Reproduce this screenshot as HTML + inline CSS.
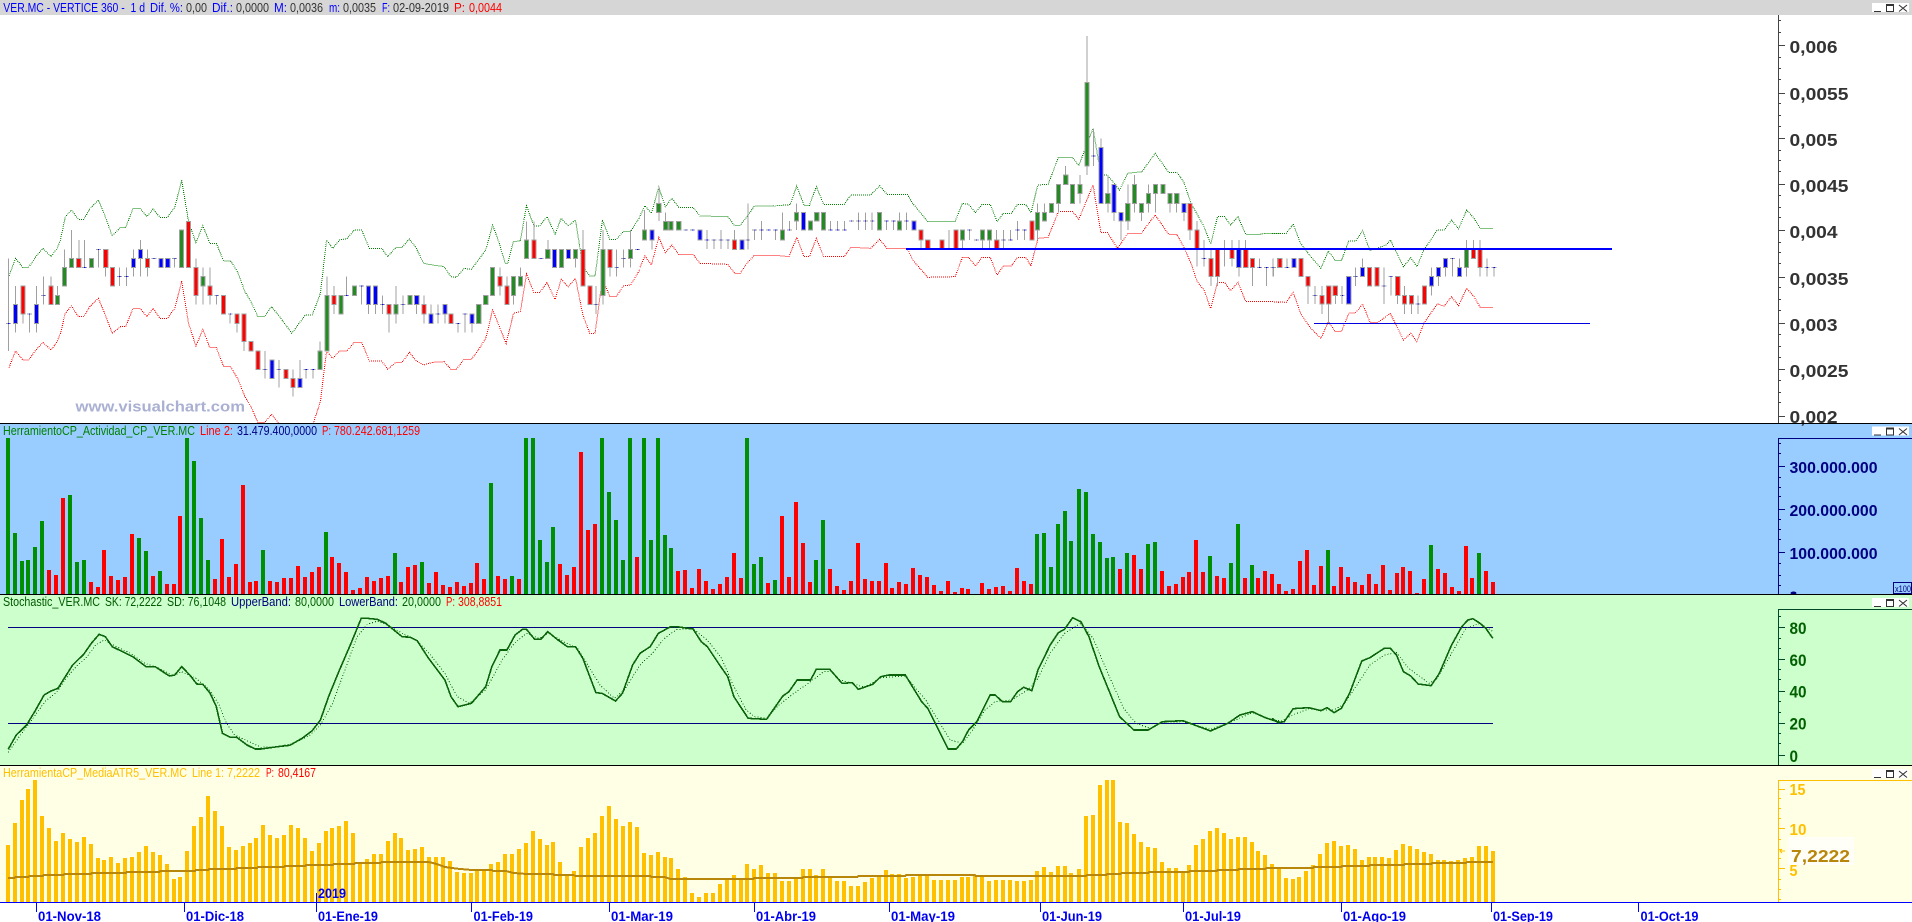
<!DOCTYPE html>
<html><head><meta charset="utf-8"><title>VER.MC</title>
<style>
html,body{margin:0;padding:0;background:#fff;overflow:hidden}
svg{display:block}
text{font-family:"Liberation Sans",Arial,sans-serif}
.t{font-size:13px}
.b{font-weight:bold;font-size:17.5px}
.b2{font-weight:bold;font-size:16px}
.b3{font-weight:bold;font-size:16.5px}
.b4{font-weight:bold;font-size:15.5px}
.d{font-weight:bold;font-size:14px;fill:#0000f0}
.ns{vector-effect:non-scaling-stroke;fill:none}
.body{vector-effect:non-scaling-stroke;stroke:#a0a0a0;stroke-width:1;shape-rendering:crispEdges}
.wick{vector-effect:non-scaling-stroke;stroke:#a0a0a0;stroke-width:1;fill:none;shape-rendering:crispEdges}
.dot{vector-effect:non-scaling-stroke;stroke:#0000ff;stroke-width:1;fill:none;shape-rendering:crispEdges}
.eg{vector-effect:non-scaling-stroke;stroke:#008000;stroke-width:1;stroke-dasharray:1 1;fill:none;shape-rendering:crispEdges}
.er{vector-effect:non-scaling-stroke;stroke:#ff0000;stroke-width:1;stroke-dasharray:1 1;fill:none;shape-rendering:crispEdges}
.sk{vector-effect:non-scaling-stroke;stroke:#0b640b;stroke-width:1.6;fill:none;shape-rendering:crispEdges}
.sd{vector-effect:non-scaling-stroke;stroke:#0b640b;stroke-width:1;stroke-dasharray:1 2;fill:none;shape-rendering:crispEdges}
.ma{vector-effect:non-scaling-stroke;stroke:#b8860b;stroke-width:2;fill:none;shape-rendering:crispEdges}
.bar{fill:none;stroke-width:4;shape-rendering:crispEdges}
.tk{fill:none;stroke-width:1;shape-rendering:crispEdges}
.ico{fill:none;stroke:#333;stroke-width:1}
</style></head>
<body>
<svg width="1912" height="922" viewBox="0 0 1912 922" xmlns="http://www.w3.org/2000/svg">
<defs><clipPath id="c1"><rect x="0" y="15" width="1778" height="408"/></clipPath></defs>
<rect width="1912" height="922" fill="#fff"/>
<rect width="1912" height="15" fill="#d6d6d6"/>
<rect y="424" width="1912" height="170" fill="#99ccff"/>
<rect y="595" width="1912" height="170" fill="#ccffcc"/>
<rect y="766" width="1912" height="136" fill="#ffffe6"/>

<!-- envelopes -->
<g clip-path="url(#c1)">
<g transform="scale(.40816 .33333)">
<polyline class="eg" points="22,828 38,775 56,802 70,802 88,770 105,745 125,770 140,745 148,720 160,650 175,630 192,658 205,658 220,627 241,600 258,650 275,708 295,682 308,682 326,625 343,625 360,650 375,627 392,652 410,652 428,622 445,540 462,665 480,728 497,677 514,730 530,730 548,783 565,783 582,815 600,875 615,905 632,950 648,950 665,920 682,945 715,1000 748,945 765,945 785,880 800,720 815,745 832,720 850,716 868,690 886,690 905,745 935,745 950,770 970,742 985,742 1003,717 1020,745 1038,790 1060,795 1088,800 1105,830 1118,832 1137,805 1155,808 1172,780 1190,750 1207,675 1222,725 1238,790 1244,790 1258,725 1275,722 1290,617 1308,678 1322,678 1340,650 1360,702 1375,655 1392,678 1410,660 1428,800 1445,828 1458,828 1476,660 1494,718 1510,718 1527,695 1545,695 1568,650"/>
<polyline class="er" points="22,1103 38,1053 56,1080 70,1080 88,1050 105,1027 125,1050 140,1025 148,1000 160,940 175,918 192,950 205,950 220,920 241,895 258,945 275,1000 295,980 308,980 326,925 343,925 360,950 375,925 392,955 410,955 428,925 445,843 462,970 480,1038 497,988 514,1043 530,1043 548,1100 565,1100 582,1135 600,1190 615,1220 632,1268 648,1268 665,1243 682,1268 715,1320 748,1300 768,1268 785,1205 800,1053 815,1075 832,1053 850,1053 868,1027 886,1027 905,1083 935,1083 950,1108 970,1087 985,1087 1003,1057 1020,1083 1038,1095 1060,1087 1088,1085 1105,1108 1118,1108 1137,1078 1155,1078 1172,1050 1190,1015 1207,930 1222,975 1240,1030 1258,940 1275,935 1290,822 1308,878 1322,878 1340,848 1360,898 1375,838 1392,860 1410,835 1428,945 1445,1000 1458,1000 1476,835 1494,890 1510,890 1527,858 1545,855 1568,808"/>
</g>
<g transform="translate(640 0) scale(.40816 .33333)">
<polyline class="eg" points="0,648 12,617 28,640 46,562 62,620 78,595 95,622 130,622 147,648 215,650 232,677 245,677 262,650 280,618 325,618 368,614 384,558 402,616 415,616 432,560 450,613 500,613 517,585 565,585 587,557 605,583 655,583 668,610 705,665 772,665 790,610 805,613 822,638 838,613 858,613 875,665 890,640 910,640 925,613 945,613 958,638 975,555 1000,553 1025,472 1060,472 1075,497 1110,385 1129,525 1145,525 1175,570 1195,520 1230,515 1262,460 1295,517 1315,517 1332,545 1350,610 1382,680 1398,732 1415,650 1432,650 1447,675 1465,650 1484,703 1520,703 1530,700 1568,700"/>
<polyline class="er" points="0,802 12,768 28,795 46,712 62,758 78,735 95,763 130,763 147,790 215,793 232,820 245,820 262,790 280,766 335,766 365,770 384,712 402,770 415,770 432,715 450,770 500,770 517,742 565,745 587,718 605,745 655,745 668,780 705,832 772,830 790,772 805,772 822,798 838,772 858,772 875,825 890,798 910,798 925,772 945,772 958,798 975,715 1000,712 1025,635 1060,635 1075,658 1110,555 1129,697 1145,697 1170,745 1195,700 1228,700 1262,645 1295,703 1315,703 1332,740 1350,790 1365,845 1382,870 1398,925 1415,847 1432,847 1447,872 1465,847 1484,905 1550,905 1568,908"/>
</g>
<g transform="translate(1272 0) scale(.40816 .33333)">
<polyline class="eg" points="0,700 35,700 52,672 70,730 95,770 120,805 138,753 155,782 170,782 188,723 205,723 222,692 240,752 280,735 290,720 322,800 340,773 355,800 372,750 405,690 422,690 440,660 457,687 477,630 495,655 510,685 541,685"/>
<polyline class="er" points="0,905 35,907 52,877 70,940 95,985 120,1015 138,965 155,995 170,995 188,940 205,938 222,912 240,967 260,967 290,940 322,1020 340,1000 355,1025 372,970 405,912 422,918 440,890 457,917 477,865 495,890 510,922 541,922"/>
</g>
</g>

<!-- candles segment 1 -->
<g transform="scale(.40816 .33333)">
<path class="wick" d="M21 775V1053M38 858V997M56 858V970M72 942V997M89 858V997M107 830V913M125 830V913M141 858V913M158 748V858M175 690V802M193 720V802M207 720V802M241 748V802M259 748V830M293 802V858M310 802V858M327 748V830M344 720V830M361 748V830M428 775V802M480 775V913M497 802V913M514 802V913M531 886V913M564 942V970M581 942V997M598 942V1053M649 1053V1135M683 1080V1163M718 1108V1190M735 1080V1163M750 1108V1135M767 1108V1135M784 1025V1108M801 830V1053M818 858V942M849 830V886M886 858V913M903 858V942M920 858V942M937 886V942M953 913V997M970 858V970M987 886V942M1021 886V942M1039 886V970M1056 913V970M1073 913V970M1090 913V970M1122 970V997M1139 942V997M1156 942V997M1225 802V886M1242 830V913M1258 830V913M1275 802V858M1290 665V775M1308 665V775M1342 720V775M1410 748V802M1428 690V858M1460 858V942M1477 690V913M1494 748V830M1511 748V830M1528 748V802M1545 690V802"/>
<path class="body" fill="#228b22" d="M136 886h10V913h-10zM153 802h10V858h-10zM170 775h10V802h-10zM219 775h10V802h-10zM440 690h10V802h-10zM492 830h10V858h-10zM796 886h10V1053h-10zM779 1053h10V1108h-10zM830 886h10V942h-10zM864 858h10V886h-10zM965 913h10V942h-10zM999 886h10V913h-10zM1168 913h10V970h-10zM1185 886h10V913h-10zM1202 802h10V886h-10zM1253 830h10V886h-10zM1270 830h10V858h-10zM1285 720h10V775h-10zM1337 748h10V775h-10zM1371 748h10V802h-10zM1405 748h10V775h-10zM1472 748h10V886h-10zM1540 748h10V775h-10z"/>
<path class="body" fill="#ff0000" d="M51 858h10V942h-10zM120 858h10V913h-10zM188 775h10V802h-10zM254 748h10V802h-10zM271 802h10V858h-10zM356 775h10V802h-10zM457 665h10V802h-10zM475 802h10V886h-10zM509 858h10V886h-10zM543 886h10V942h-10zM576 942h10V970h-10zM593 942h10V1025h-10zM610 1025h10V1053h-10zM627 1053h10V1108h-10zM696 1108h10V1135h-10zM713 1135h10V1163h-10zM813 886h10V913h-10zM948 913h10V942h-10zM1034 913h10V942h-10zM1100 942h10V970h-10zM1220 830h10V858h-10zM1237 858h10V913h-10zM1303 720h10V775h-10zM1423 748h10V858h-10zM1440 858h10V913h-10zM1489 748h10V802h-10z"/>
<path class="body" fill="#0000ff" d="M33 913h10V970h-10zM84 913h10V970h-10zM322 775h10V802h-10zM339 748h10V775h-10zM389 775h10V802h-10zM406 775h10V802h-10zM661 1080h10V1135h-10zM730 1135h10V1163h-10zM898 858h10V913h-10zM915 858h10V913h-10zM1016 886h10V913h-10zM1051 942h10V970h-10zM1085 913h10V942h-10zM1151 942h10V970h-10zM1354 748h10V802h-10zM1388 748h10V775h-10z"/>
<path class="wick" d="M15 970h12M66 942h12M101 886h12M201 802h12M235 748h12M287 830h12M304 830h12M371 775h12M422 775h12M525 886h12M558 942h12M643 1108h12M677 1108h12M744 1108h12M761 1108h12M843 886h12M880 858h12M931 913h12M981 913h12M1067 942h12M1116 970h12M1133 942h12M1319 775h12M1454 913h12M1505 802h12M1522 775h12M1556 748h12"/>
<path class="dot" d="M20 970h3M71 942h3M106 886h3M206 802h3M240 748h3M292 830h3M309 830h3M376 775h3M427 775h3M530 886h3M563 942h3M648 1108h3M682 1108h3M749 1108h3M766 1108h3M848 886h3M885 858h3M936 913h3M986 913h3M1072 942h3M1121 970h3M1138 942h3M1324 775h3M1459 913h3M1510 802h3M1527 775h3M1561 748h3"/>
</g>
<!-- candles segment 2 -->
<g transform="translate(640 0) scale(.40816 .33333)">
<path class="wick" d="M11 630V720M29 690V748M46 560V663M63 637V690M164 690V747M181 720V747M198 690V747M215 720V747M232 690V748M264 610V748M281 690V720M298 663V720M332 690V720M349 637V720M366 663V690M383 610V690M467 663V690M484 663V690M501 663V690M535 637V690M552 637V690M569 637V690M604 663V690M621 663V690M636 637V690M653 637V690M688 690V748M757 690V748M790 690V748M807 690V720M839 690V748M856 690V748M874 690V748M891 690V748M908 690V720M925 663V720M942 690V720M974 610V720M991 610V663M1025 553V637M1043 498V553M1078 525V610M1095 108V525M1111 385V498M1129 415V610M1146 525V637M1161 553V663M1178 637V720M1195 553V690M1212 525V637M1229 610V663M1246 553V637M1263 553V637M1298 580V637M1315 580V637M1333 610V663M1348 610V720M1365 663V800M1382 720V800M1399 748V858M1415 748V858M1432 720V800M1450 720V800M1467 720V830M1484 720V802M1501 775V858M1518 775V802M1535 802V858M1552 802V830"/>
<path class="body" fill="#228b22" d="M6 690h10V720h-10zM41 610h10V637h-10zM58 665h10V690h-10zM71 665h10V690h-10zM90 665h10V690h-10zM344 690h10V720h-10zM378 637h10V663h-10zM413 663h10V690h-10zM428 637h10V663h-10zM445 637h10V690h-10zM582 637h10V690h-10zM631 663h10V690h-10zM785 690h10V720h-10zM834 690h10V720h-10zM851 690h10V720h-10zM969 637h10V690h-10zM986 637h10V663h-10zM1003 610h10V637h-10zM1020 553h10V610h-10zM1038 525h10V553h-10zM1055 553h10V610h-10zM1073 553h10V580h-10zM1090 248h10V498h-10zM1141 580h10V610h-10zM1190 610h10V663h-10zM1207 553h10V610h-10zM1224 610h10V637h-10zM1241 580h10V610h-10zM1258 553h10V580h-10zM1276 553h10V580h-10zM1293 580h10V610h-10zM1310 580h10V610h-10z"/>
<path class="body" fill="#ff0000" d="M227 720h10V748h-10zM683 690h10V720h-10zM700 720h10V748h-10zM735 720h10V748h-10zM769 690h10V748h-10zM869 720h10V748h-10zM955 663h10V720h-10zM1343 610h10V690h-10zM1360 690h10V748h-10zM1394 775h10V830h-10zM1410 748h10V830h-10zM1445 748h10V775h-10zM1479 748h10V802h-10zM1496 775h10V802h-10zM1562 775h10V802h-10z"/>
<path class="body" fill="#0000ff" d="M24 690h10V720h-10zM142 690h10V720h-10zM245 720h10V748h-10zM396 637h10V690h-10zM666 663h10V690h-10zM1124 443h10V610h-10zM1156 553h10V637h-10zM1173 637h10V663h-10zM1328 610h10V637h-10zM1462 748h10V802h-10z"/>
<path class="wick" d="M106 690h12M123 690h12M158 720h12M175 720h12M192 720h12M209 720h12M258 720h12M275 690h12M292 690h12M309 690h12M326 690h12M360 690h12M461 690h12M478 690h12M495 690h12M512 663h12M529 663h12M546 663h12M563 663h12M598 663h12M615 663h12M647 663h12M716 748h12M751 748h12M801 690h12M818 720h12M885 720h12M902 720h12M919 690h12M936 690h12M1105 468h12M1376 775h12M1426 748h12M1512 802h12M1529 802h12M1546 802h12"/>
<path class="dot" d="M111 690h3M128 690h3M163 720h3M180 720h3M197 720h3M214 720h3M263 720h3M280 690h3M297 690h3M314 690h3M331 690h3M365 690h3M466 690h3M483 690h3M500 690h3M517 663h3M534 663h3M551 663h3M568 663h3M603 663h3M620 663h3M652 663h3M806 690h3M823 720h3M890 720h3M907 720h3M924 690h3M941 690h3M1110 468h3M1381 775h3M1517 802h3M1534 802h3M1551 802h3"/>
</g>
<!-- candles segment 3 -->
<g transform="translate(1272 0) scale(.40816 .33333)">
<path class="wick" d="M2 775V830M37 775V802M88 830V912M105 858V912M122 858V942M139 858V970M155 858V912M172 858V912M205 802V858M222 775V830M274 802V912M291 830V886M308 830V912M325 858V942M342 886V942M358 886V942M391 802V886M408 802V858M425 775V830M442 775V830M459 775V830M477 720V830M494 720V775M510 720V830M527 775V830M544 802V830"/>
<path class="body" fill="#ff0000" d="M15 775h10V802h-10zM66 775h10V830h-10zM83 830h10V858h-10zM117 886h10V912h-10zM134 858h10V912h-10zM150 858h10V886h-10zM234 802h10V858h-10zM252 802h10V858h-10zM303 830h10V886h-10zM320 886h10V912h-10zM337 886h10V912h-10zM369 858h10V912h-10zM489 748h10V775h-10zM505 748h10V802h-10z"/>
<path class="body" fill="#0000ff" d="M49 775h10V802h-10zM183 830h10V912h-10zM217 802h10V830h-10zM386 830h10V858h-10zM403 802h10V830h-10zM420 775h10V802h-10zM454 802h10V830h-10z"/>
<path class="body" fill="#228b22" d="M472 748h10V802h-10z"/>
<path class="wick" d="M-4 802h12M31 802h12M99 886h12M166 886h12M199 830h12M268 858h12M285 830h12M352 912h12M436 775h12M521 802h12M538 802h12"/>
<path class="dot" d="M1 802h3M36 802h3M104 886h3M171 886h3M204 830h3M273 858h3M290 830h3M357 912h3M441 775h3M526 802h3M543 802h3"/>
</g>
<!-- support / resistance -->
<rect x="906" y="248" width="706" height="2" fill="#0000ff"/>
<rect x="1314" y="323" width="276" height="1" fill="#0000e0"/>

<text x="75.5" y="411.5" font-size="15" font-weight="bold" fill="#aab0d2" textLength="169.5" lengthAdjust="spacingAndGlyphs">www.visualchart.com</text>

<!-- title 1 -->
<g class="t">
<text x="3.3" y="12" fill="#0000ff" textLength="141.7" lengthAdjust="spacingAndGlyphs" xml:space="preserve">VER.MC - VERTICE 360 -  1 d</text>
<text x="150" y="12" fill="#0000ff" textLength="33" lengthAdjust="spacingAndGlyphs">Dif. %:</text>
<text x="186" y="12" fill="#333" textLength="21" lengthAdjust="spacingAndGlyphs">0,00</text>
<text x="212" y="12" fill="#0000ff" textLength="21" lengthAdjust="spacingAndGlyphs">Dif.:</text>
<text x="236" y="12" fill="#333" textLength="33" lengthAdjust="spacingAndGlyphs">0,0000</text>
<text x="274" y="12" fill="#0000ff" textLength="13" lengthAdjust="spacingAndGlyphs">M:</text>
<text x="290" y="12" fill="#333" textLength="33" lengthAdjust="spacingAndGlyphs">0,0036</text>
<text x="329" y="12" fill="#0000ff" textLength="11" lengthAdjust="spacingAndGlyphs">m:</text>
<text x="343" y="12" fill="#333" textLength="33" lengthAdjust="spacingAndGlyphs">0,0035</text>
<text x="382" y="12" fill="#0000ff" textLength="8" lengthAdjust="spacingAndGlyphs">F:</text>
<text x="393" y="12" fill="#333" textLength="56" lengthAdjust="spacingAndGlyphs">02-09-2019</text>
<text x="454" y="12" fill="#ff0000" textLength="11" lengthAdjust="spacingAndGlyphs">P:</text>
<text x="469" y="12" fill="#ff0000" textLength="33" lengthAdjust="spacingAndGlyphs">0,0044</text>
</g>

<!-- axis 1 -->
<path d="M1778.5 15V423" stroke="#444" fill="none" class="tk"/>
<path class="tk" stroke="#444" d="M1778 45.5h7M1778 93.5h7M1778 138.5h7M1778 184.5h7M1778 230.5h7M1778 277.5h7M1778 323.5h7M1778 369.5h7M1778 416.5h7M1778 20.5h3M1778 32.5h3M1778 57.5h3M1778 68.5h3M1778 79.5h3M1778 103.5h3M1778 115.5h3M1778 126.5h3M1778 150.5h3M1778 160.5h3M1778 171.5h3M1778 195.5h3M1778 207.5h3M1778 217.5h3M1778 242.5h3M1778 252.5h3M1778 263.5h3M1778 287.5h3M1778 299.5h3M1778 310.5h3M1778 334.5h3M1778 346.5h3M1778 357.5h3M1778 380.5h3M1778 392.5h3M1778 402.5h3"/>
<g class="b" fill="#333">
<text x="1789.5" y="53" textLength="48" lengthAdjust="spacingAndGlyphs">0,006</text>
<text x="1789.5" y="100" textLength="59" lengthAdjust="spacingAndGlyphs">0,0055</text>
<text x="1789.5" y="146" textLength="48" lengthAdjust="spacingAndGlyphs">0,005</text>
<text x="1789.5" y="192" textLength="59" lengthAdjust="spacingAndGlyphs">0,0045</text>
<text x="1789.5" y="238" textLength="48" lengthAdjust="spacingAndGlyphs">0,004</text>
<text x="1789.5" y="285" textLength="59" lengthAdjust="spacingAndGlyphs">0,0035</text>
<text x="1789.5" y="331" textLength="48" lengthAdjust="spacingAndGlyphs">0,003</text>
<text x="1789.5" y="377" textLength="59" lengthAdjust="spacingAndGlyphs">0,0025</text>
<text x="1789.5" y="423" textLength="48" lengthAdjust="spacingAndGlyphs">0,002</text>
</g>

<!-- volume -->
<path class="bar" stroke="#008f00" d="M8 594V438M15 594V533M22 594V561M28 594V560M35 594V547M42 594V521M70 594V495M77 594V562M84 594V560M139 594V538M146 594V551M160 594V571M187 594V438M194 594V461M201 594V518M208 594V560M263 594V550M326 594V532M395 594V553M422 594V562M491 594V483M512 594V576M526 594V438M533 594V438M540 594V540M547 594V562M553 594V527M602 594V438M609 594V492M616 594V520M623 594V560M630 594V438M644 594V438M651 594V540M658 594V438M665 594V535M671 594V548M747 594V438M754 594V564M761 594V557M775 594V580M816 594V560M823 594V520M1037 594V534M1044 594V533M1051 594V567M1058 594V524M1065 594V511M1071 594V541M1079 594V489M1086 594V492M1093 594V534M1100 594V542M1107 594V558M1113 594V557M1127 594V553M1148 594V544M1155 594V542M1210 594V556M1231 594V563M1238 594V524M1252 594V565M1328 594V550M1431 594V545M1479 594V553"/>
<path class="bar" stroke="#ff0000" d="M49 594V570M56 594V575M63 594V498M91 594V582M98 594V587M104 594V550M111 594V576M118 594V580M125 594V577M132 594V534M153 594V576M167 594V584M174 594V584M180 594V516M215 594V579M222 594V539M229 594V577M236 594V564M243 594V485M250 594V582M256 594V581M270 594V581M277 594V582M284 594V578M291 594V578M298 594V566M305 594V577M312 594V572M319 594V567M332 594V557M339 594V563M346 594V572M353 594V590M360 594V588M367 594V577M374 594V581M381 594V578M388 594V576M401 594V582M408 594V567M415 594V565M429 594V583M436 594V572M443 594V585M450 594V587M457 594V582M464 594V586M471 594V583M477 594V563M484 594V579M498 594V576M505 594V579M519 594V579M560 594V564M567 594V575M574 594V567M581 594V452M588 594V530M595 594V524M637 594V557M678 594V571M685 594V570M692 594V588M699 594V569M706 594V581M713 594V589M720 594V584M727 594V577M734 594V553M741 594V578M768 594V583M782 594V516M789 594V577M796 594V502M803 594V543M810 594V582M830 594V569M837 594V586M844 594V590M851 594V581M858 594V543M865 594V579M872 594V581M879 594V581M886 594V563M892 594V588M899 594V582M906 594V584M913 594V568M920 594V575M927 594V577M934 594V585M941 594V591M948 594V581M955 594V592M962 594V588M968 594V589M982 594V583M989 594V589M996 594V587M1003 594V586M1010 594V591M1017 594V568M1024 594V581M1031 594V584M1120 594V569M1134 594V555M1141 594V569M1162 594V571M1169 594V586M1176 594V584M1183 594V577M1189 594V572M1196 594V540M1203 594V572M1217 594V576M1224 594V578M1245 594V578M1258 594V578M1265 594V571M1272 594V574M1279 594V584M1286 594V591M1293 594V589M1300 594V561M1307 594V550M1314 594V585M1321 594V566M1334 594V586M1341 594V567M1348 594V577M1355 594V582M1362 594V585M1369 594V574M1376 594V584M1383 594V565M1390 594V590M1397 594V573M1403 594V567M1410 594V571M1417 594V593M1424 594V579M1438 594V569M1445 594V573M1452 594V587M1459 594V591M1466 594V546M1472 594V578M1486 594V571M1493 594V582"/>

<!-- axis 2 -->
<path class="tk" stroke="#000080" d="M1778.5 438V594M1778 438.5H1912M1778 466.5h7M1778 509.5h7M1778 552.5h7M1778 443.5h3M1778 453.5h3M1778 477.5h3M1778 487.5h3M1778 496.5h3M1778 519.5h3M1778 529.5h3M1778 539.5h3M1778 563.5h3M1778 575.5h3M1778 585.5h3"/>
<g class="b2" fill="#000080">
<text x="1789.5" y="473" textLength="88" lengthAdjust="spacingAndGlyphs">300.000.000</text>
<text x="1789.5" y="516" textLength="88" lengthAdjust="spacingAndGlyphs">200.000.000</text>
<text x="1789.5" y="559" textLength="88" lengthAdjust="spacingAndGlyphs">100.000.000</text>
</g>
<ellipse cx="1793.5" cy="593" rx="3" ry="1.5" fill="#000080"/>
<rect x="1893.5" y="582.5" width="18" height="11" fill="#99ccff" stroke="#000080"/>
<text x="1895" y="592" font-size="9" fill="#000080" textLength="16" lengthAdjust="spacingAndGlyphs">x100</text>
<g class="t">
<text x="3" y="435" fill="#008000" textLength="192" lengthAdjust="spacingAndGlyphs">HerramientoCP_Actividad_CP_VER.MC</text>
<text x="200" y="435" fill="#ff0000" textLength="33" lengthAdjust="spacingAndGlyphs">Line 2:</text>
<text x="237" y="435" fill="#000080" textLength="80" lengthAdjust="spacingAndGlyphs">31.479.400,0000</text>
<text x="322" y="435" fill="#ff0000" textLength="9" lengthAdjust="spacingAndGlyphs">P:</text>
<text x="334" y="435" fill="#ff0000" textLength="86" lengthAdjust="spacingAndGlyphs">780.242.681,1259</text>
</g>

<!-- stochastic -->
<path d="M8 627.5H1493M8 723.5H1493" class="tk" stroke="#000080"/>
<g transform="translate(0 590) scale(.40816 .33333)">
<polyline class="sd" points="20,487 50,435 75,395 110,335 140,305 165,260 190,225 210,205 235,165 255,150 285,170 320,190 355,220 390,235 425,258 445,245 480,265 510,295 535,340 555,400 575,435 610,455 640,472 680,470 720,460 760,435 785,405 815,340 845,240 875,140 900,103 925,93 955,108 985,130 1020,150 1055,195 1090,250 1120,320 1150,340 1190,300 1230,210 1260,160 1290,130 1320,145 1345,130 1380,155 1415,175 1440,225 1470,285 1505,325 1530,300 1568,225"/>
<polyline class="sk" points="20,478 40,435 65,405 85,365 108,315 125,303 142,295 160,260 178,225 205,193 225,158 243,133 258,140 275,170 300,185 325,200 358,230 380,230 415,258 428,255 445,230 465,255 482,282 497,283 515,310 530,350 545,430 565,442 580,442 605,465 625,477 640,477 680,470 710,466 740,445 765,422 785,390 805,320 830,245 860,160 885,85 900,85 925,88 945,100 985,140 1005,142 1022,152 1050,205 1090,270 1105,320 1122,350 1155,340 1190,290 1205,230 1225,180 1242,180 1262,135 1280,118 1290,118 1310,148 1325,148 1342,125 1365,148 1390,170 1410,170 1428,205 1445,260 1460,308 1475,310 1508,333 1525,310 1550,225 1568,190"/>
</g>
<g transform="translate(640 590) scale(.40816 .33333)">
<polyline class="sd" points="0,225 30,190 60,145 90,118 130,117 165,150 200,205 230,290 260,360 280,380 310,385 340,345 375,312 420,273 450,245 470,245 490,270 520,280 550,292 590,263 650,258 700,330 735,400 760,450 790,460 815,420 845,360 870,335 910,330 950,300 975,265 1005,190 1040,130 1080,100 1110,145 1150,260 1185,355 1215,400 1250,415 1280,397 1330,395 1398,418 1450,395 1500,368 1540,385 1568,395"/>
<polyline class="sk" points="0,190 25,170 45,130 75,110 90,110 130,117 150,155 165,170 195,225 215,260 230,320 265,385 310,388 350,318 365,305 385,270 418,270 432,238 465,238 495,280 520,278 535,298 570,283 590,260 610,255 650,255 690,335 705,355 755,477 775,477 790,455 805,420 825,395 858,315 870,315 888,335 908,335 925,305 940,292 960,302 975,240 1005,165 1025,128 1040,118 1060,83 1080,95 1100,140 1125,230 1145,290 1175,380 1210,420 1245,420 1280,395 1330,392 1398,423 1440,400 1470,375 1500,365 1530,382 1568,398"/>
</g>
<g transform="translate(1272 590) scale(.40816 .33333)">
<polyline class="sd" points="0,390 25,393 50,375 90,357 120,360 150,360 175,345 200,300 240,225 275,195 305,188 335,235 385,280 405,265 440,190 475,115 510,100 541,125"/>
<polyline class="sk" points="0,385 15,398 30,395 52,356 90,353 120,362 135,353 152,368 170,355 190,310 220,213 240,203 275,175 290,175 305,195 322,245 340,258 358,282 390,287 410,250 440,165 465,110 480,90 492,86 510,100 525,117 541,145"/>
</g>
<path class="tk" stroke="#004a2a" d="M1778.5 609V765M1778 609.5H1912M1778 627.5h7M1778 659.5h7M1778 691.5h7M1778 723.5h7M1778 755.5h7M1778 616.5h3M1778 638.5h3M1778 648.5h3M1778 669.5h3M1778 679.5h3M1778 701.5h3M1778 712.5h3M1778 733.5h3M1778 743.5h3"/>
<g class="b3" fill="#006000">
<text x="1789.5" y="634" textLength="17" lengthAdjust="spacingAndGlyphs">80</text>
<text x="1789.5" y="666" textLength="17" lengthAdjust="spacingAndGlyphs">60</text>
<text x="1789.5" y="697.5" textLength="17" lengthAdjust="spacingAndGlyphs">40</text>
<text x="1789.5" y="729.5" textLength="17" lengthAdjust="spacingAndGlyphs">20</text>
<text x="1789.5" y="762" textLength="8.5" lengthAdjust="spacingAndGlyphs">0</text>
</g>
<g class="t">
<text x="3" y="606" fill="#005a00" textLength="97" lengthAdjust="spacingAndGlyphs">Stochastic_VER.MC</text>
<text x="105" y="606" fill="#005a00" textLength="57" lengthAdjust="spacingAndGlyphs">SK: 72,2222</text>
<text x="167" y="606" fill="#005a00" textLength="59" lengthAdjust="spacingAndGlyphs">SD: 76,1048</text>
<text x="231" y="606" fill="#000080" textLength="60" lengthAdjust="spacingAndGlyphs">UpperBand:</text>
<text x="295" y="606" fill="#005a00" textLength="39" lengthAdjust="spacingAndGlyphs">80,0000</text>
<text x="339" y="606" fill="#000080" textLength="59" lengthAdjust="spacingAndGlyphs">LowerBand:</text>
<text x="402" y="606" fill="#005a00" textLength="39" lengthAdjust="spacingAndGlyphs">20,0000</text>
<text x="446" y="606" fill="#ff0000" textLength="9" lengthAdjust="spacingAndGlyphs">P:</text>
<text x="458" y="606" fill="#ff0000" textLength="44" lengthAdjust="spacingAndGlyphs">308,8851</text>
</g>

<!-- ATR -->
<path class="bar" stroke="#ffc000" d="M8 902V845M15 902V823M22 902V800M28 902V789M35 902V780M42 902V816M49 902V828M56 902V841M63 902V833M70 902V839M77 902V842M84 902V837M91 902V844M98 902V858M104 902V860M111 902V857M118 902V863M125 902V858M132 902V857M139 902V852M146 902V846M153 902V852M160 902V855M167 902V864M174 902V879M180 902V877M187 902V851M194 902V826M201 902V817M208 902V796M215 902V811M222 902V826M229 902V847M236 902V850M243 902V846M250 902V843M256 902V838M263 902V825M270 902V835M277 902V838M284 902V835M291 902V825M298 902V828M305 902V838M312 902V851M319 902V843M326 902V831M332 902V828M339 902V826M346 902V821M353 902V833M360 902V863M367 902V859M374 902V854M381 902V854M388 902V841M395 902V833M401 902V838M408 902V850M415 902V849M422 902V847M429 902V857M436 902V857M443 902V857M450 902V861M457 902V872M464 902V873M471 902V873M477 902V871M484 902V870M491 902V864M498 902V862M505 902V854M512 902V854M519 902V849M526 902V843M533 902V831M540 902V839M547 902V845M553 902V842M560 902V862M567 902V875M574 902V871M581 902V847M588 902V838M595 902V833M602 902V816M609 902V806M616 902V819M623 902V826M630 902V822M637 902V827M644 902V853M651 902V855M658 902V852M665 902V857M671 902V858M678 902V869M685 902V877M692 902V893M699 902V897M706 902V893M713 902V893M720 902V884M727 902V879M734 902V875M741 902V880M747 902V864M754 902V869M761 902V865M768 902V873M775 902V873M782 902V881M789 902V881M796 902V878M803 902V869M810 902V869M816 902V875M823 902V869M830 902V878M837 902V881M844 902V881M851 902V886M858 902V886M865 902V882M872 902V878M879 902V876M886 902V870M892 902V874M899 902V874M906 902V878M913 902V877M920 902V875M927 902V875M934 902V880M941 902V880M948 902V880M955 902V880M962 902V877M968 902V877M975 902V875M982 902V877M989 902V881M996 902V880M1003 902V880M1010 902V880M1017 902V881M1024 902V881M1031 902V880M1037 902V871M1044 902V867M1051 902V872M1058 902V866M1065 902V866M1071 902V873M1079 902V869M1086 902V816M1093 902V815M1100 902V785M1107 902V780M1113 902V780M1120 902V822M1127 902V823M1134 902V834M1141 902V842M1148 902V847M1155 902V848M1162 902V862M1169 902V868M1176 902V868M1183 902V873M1189 902V865M1196 902V845M1203 902V839M1210 902V831M1217 902V828M1224 902V833M1231 902V839M1238 902V837M1245 902V837M1252 902V842M1258 902V851M1265 902V855M1272 902V864M1279 902V869M1286 902V878M1293 902V879M1299 902V877M1306 902V871M1313 902V865M1320 902V854M1327 902V843M1334 902V841M1341 902V846M1348 902V845M1355 902V849M1362 902V860M1369 902V857M1375 902V857M1382 902V857M1389 902V858M1396 902V850M1403 902V844M1410 902V846M1417 902V849M1424 902V852M1431 902V854M1438 902V860M1444 902V860M1451 902V861M1458 902V860M1465 902V858M1472 902V857M1479 902V846M1486 902V846M1493 902V851"/>
<g transform="translate(0 760) scale(.40816 .33333)">
<polyline class="ma" points="20,354 35,354 38,351 70,351 72,348 105,348 107,345 155,345 158,342 222,342 225,339 308,339 310,336 390,336 393,333 478,333 480,330 510,330 512,327 578,327 580,324 630,324 632,321 696,321 698,318 748,318 750,315 815,315 818,312 868,312 870,309 932,309 935,306 1050,306 1070,312 1090,321 1120,326 1155,330 1205,330 1208,333 1240,333 1258,339 1290,342 1355,342 1358,345 1405,345 1410,348 1568,348"/>
</g>
<g transform="translate(640 760) scale(.40816 .33333)">
<polyline class="ma" points="0,348 25,348 28,351 60,351 75,357 278,357 280,354 398,354 400,351 533,351 535,348 650,348 652,345 820,345 822,348 1092,348 1095,345 1143,345 1145,342 1177,342 1180,339 1245,339 1247,336 1345,336 1347,333 1413,333 1415,330 1465,330 1467,327 1532,327 1535,324 1568,324"/>
</g>
<g transform="translate(1272 760) scale(.40816 .33333)">
<polyline class="ma" points="0,324 100,324 102,321 170,321 172,318 238,318 240,315 323,315 325,312 390,312 392,309 475,309 478,306 541,306"/>
</g>
<path class="tk" stroke="#ffc000" d="M1778.5 780V902M1778 780.5H1912M1778 789.5h7M1778 828.5h7M1778 868.5h7M1778 798.5h3M1778 808.5h3M1778 818.5h3M1778 839.5h3M1778 849.5h3M1778 858.5h3M1778 879.5h3M1778 889.5h3M1778 899.5h3"/>
<rect x="1788" y="837" width="66" height="28" fill="#fffff8"/>
<g class="b4" fill="#ffc000">
<text x="1789.5" y="795" textLength="16" lengthAdjust="spacingAndGlyphs">15</text>
<text x="1789.5" y="835" textLength="17" lengthAdjust="spacingAndGlyphs">10</text>
<text x="1789.5" y="876" textLength="8" lengthAdjust="spacingAndGlyphs">5</text>
</g>
<text x="1791" y="862" class="b" fill="#b8860b" textLength="59" lengthAdjust="spacingAndGlyphs">7,2222</text>
<path d="M1785 851h-5m2-2l-2 2l2 2" fill="none" stroke="#ffc000"/>
<g class="t">
<text x="3" y="777" fill="#ffc000" textLength="184" lengthAdjust="spacingAndGlyphs">HerramientaCP_MediaATR5_VER.MC</text>
<text x="192" y="777" fill="#ffc000" textLength="32" lengthAdjust="spacingAndGlyphs">Line 1:</text>
<text x="227" y="777" fill="#ffc000" textLength="33" lengthAdjust="spacingAndGlyphs">7,2222</text>
<text x="266" y="777" fill="#ff0000" textLength="8" lengthAdjust="spacingAndGlyphs">P:</text>
<text x="278" y="777" fill="#ff0000" textLength="38" lengthAdjust="spacingAndGlyphs">80,4167</text>
</g>

<!-- time axis -->
<rect x="0" y="902" width="1912" height="1" fill="#0000ff"/>
<path class="tk" stroke="#0000ff" d="M36.5 902v10M184.5 902v10M316.5 893v19M471.5 902v10M609.5 902v10M754.5 902v10M889.5 902v10M1040.5 902v10M1183.5 902v10M1341.5 902v10M1491.5 902v10M1638.5 902v10"/>
<text x="318" y="898" class="d" textLength="28" lengthAdjust="spacingAndGlyphs">2019</text>
<g class="d">
<text x="38" y="921" textLength="63" lengthAdjust="spacingAndGlyphs">01-Nov-18</text>
<text x="186" y="921" textLength="58" lengthAdjust="spacingAndGlyphs">01-Dic-18</text>
<text x="318" y="921" textLength="60" lengthAdjust="spacingAndGlyphs">01-Ene-19</text>
<text x="473.5" y="921" textLength="59.5" lengthAdjust="spacingAndGlyphs">01-Feb-19</text>
<text x="611" y="921" textLength="62" lengthAdjust="spacingAndGlyphs">01-Mar-19</text>
<text x="756" y="921" textLength="60" lengthAdjust="spacingAndGlyphs">01-Abr-19</text>
<text x="891" y="921" textLength="64" lengthAdjust="spacingAndGlyphs">01-May-19</text>
<text x="1042" y="921" textLength="60" lengthAdjust="spacingAndGlyphs">01-Jun-19</text>
<text x="1185" y="921" textLength="56" lengthAdjust="spacingAndGlyphs">01-Jul-19</text>
<text x="1343" y="921" textLength="63" lengthAdjust="spacingAndGlyphs">01-Ago-19</text>
<text x="1493" y="921" textLength="60" lengthAdjust="spacingAndGlyphs">01-Sep-19</text>
<text x="1640.5" y="921" textLength="58" lengthAdjust="spacingAndGlyphs">01-Oct-19</text>
</g>

<!-- window buttons -->
<g transform="translate(1872 3)"><rect width="37" height="9" fill="#fff"/><path class="ico" d="M2 8.5H9M14.5 2.5H21.5V8.5H14.5ZM14 1.5H22M27 2L35 8.5M35 2L27 8.5"/></g>
<g transform="translate(1872 426.5)"><rect width="37" height="9" fill="#fff"/><path class="ico" d="M2 8.5H9M14.5 2.5H21.5V8.5H14.5ZM14 1.5H22M27 2L35 8.5M35 2L27 8.5"/></g>
<g transform="translate(1872 598)"><rect width="37" height="9" fill="#fff"/><path class="ico" d="M2 8.5H9M14.5 2.5H21.5V8.5H14.5ZM14 1.5H22M27 2L35 8.5M35 2L27 8.5"/></g>
<g transform="translate(1872 769)"><rect width="37" height="9" fill="#fff"/><path class="ico" d="M2 8.5H9M14.5 2.5H21.5V8.5H14.5ZM14 1.5H22M27 2L35 8.5M35 2L27 8.5"/></g>

<!-- dividers -->
<rect y="423" width="1912" height="1" fill="#000"/>
<rect y="594" width="1912" height="1" fill="#000"/>
<rect y="765" width="1912" height="1" fill="#000"/>
</svg>
</body></html>
